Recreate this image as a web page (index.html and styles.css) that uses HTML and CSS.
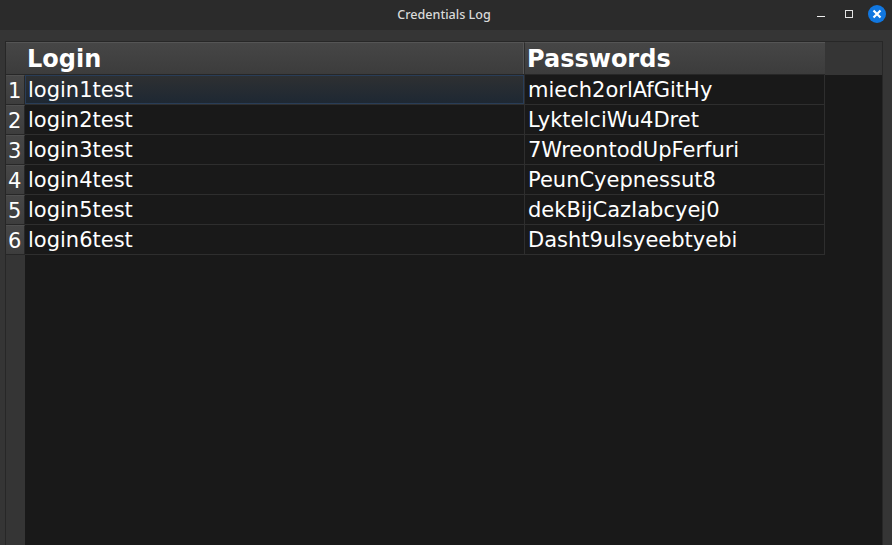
FILE: index.html
```html
<!DOCTYPE html>
<html lang="en"><head><meta charset="utf-8"><title>Credentials Log</title><link rel="stylesheet" href="styles.css"></head>
<body>
<header class="titlebar"><h1 class="title">Credentials Log</h1>
<svg class="controls" width="84" height="30" viewBox="0 0 84 30"><path d="M9 16.500h8" stroke="#eee"/><rect x="37.500" y="10.500" width="7" height="7" fill="none" stroke="#e4e4e4"/><circle cx="69" cy="14" r="9" fill="#1177e0"/><path d="M65.500 10.500l7 7M72.500 10.500l-7 7" stroke="#fff" stroke-width="2.200"/></svg>
</header>
<main class="window"><div class="view">
<div class="head"><span class="corner"></span><span class="hcell first">Login</span><span class="hcell">Passwords</span></div>
<div class="body">
<div class="row"><span class="num">1</span><span class="cell current"><span class="focus">login1test</span></span><span class="cell">miech2orlAfGitHy</span></div>
<div class="row"><span class="num">2</span><span class="cell">login2test</span><span class="cell">LyktelciWu4Dret</span></div>
<div class="row"><span class="num">3</span><span class="cell">login3test</span><span class="cell">7WreontodUpFerfuri</span></div>
<div class="row"><span class="num">4</span><span class="cell">login4test</span><span class="cell">PeunCyepnessut8</span></div>
<div class="row"><span class="num">5</span><span class="cell">login5test</span><span class="cell">dekBijCazIabcyej0</span></div>
<div class="row"><span class="num">6</span><span class="cell">login6test</span><span class="cell">Dasht9ulsyeebtyebi</span></div>
</div></div></main>
</body></html>
```
FILE: styles.css
```css
* { box-sizing: border-box; }
body { margin: 0; width: 892px; height: 545px; overflow: hidden; display: flex; flex-direction: column; background: #353535; color: #fff; font-family: "DejaVu Sans", sans-serif; font-size: 21px; }
.titlebar { height: 30px; display: flex; background: #2b2b2b; flex: none; }
.title { flex: 1; margin: 0 0 0 80px; text-align: center; font: 500 12.6px/30px "Noto Sans", sans-serif; color: #dadada; }
.controls { flex: none; }
.window { flex: 1; padding: 11px 9px 0 5px; }
.view { height: 504px; border: 1px solid #272727; border-bottom: 0; background: linear-gradient(90deg, #353535 19px, #191919 19px); }
.head, .row { display: grid; grid-template-columns: 19px 500px 300px; }
.head { height: 33px; grid-template-rows: 33px; background: #353535; }
.corner, .hcell { background: linear-gradient(#464646, #3c3c3c); border-top: 1px solid #555; border-bottom: 1px solid #272727; }
.hcell { padding-left: 2px; line-height: 32px; font-weight: bold; font-size: 24px; }
.first { border-right: 1px solid #2c2c2c; box-shadow: inset -1px 0 #555; }
.row { height: 30px; grid-template-rows: 30px; line-height: 31px; }
.num { background: linear-gradient(#474747, #3d3d3d); border-top: 1px solid #505050; border-bottom: 1px solid #272727; border-right: 1px solid #272727; padding-left: 2px; line-height: 30px; }
.cell { border-right: 1px solid #2e2e2e; border-bottom: 1px solid #2e2e2e; padding-left: 3px; }
.current { padding: 0; }
.focus { display: block; height: 29px; line-height: 29px; padding-left: 2px; border: 1px solid #293d57; background: linear-gradient(#2e3032, #1e2833); }
```
